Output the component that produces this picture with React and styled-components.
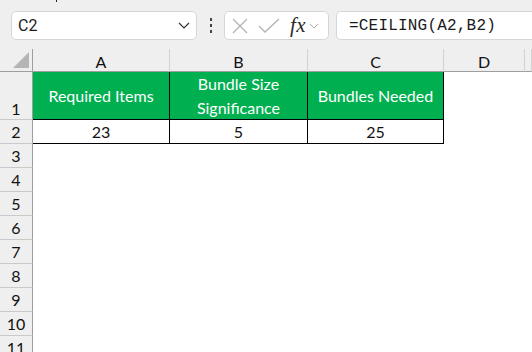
import React from "react";
import styled, { createGlobalStyle } from "styled-components";

const Global = createGlobalStyle`
  html, body { margin: 0; padding: 0; }
  body {
    background: #efefef;
    width: 532px;
    height: 352px;
    overflow: hidden;
    font-family: "Lato", "Noto Sans", sans-serif;
  }
`;

const Page = styled.div`
  width: 532px;
  height: 352px;
  overflow: hidden;
  display: flex;
  flex-direction: column;
`;

const Ribbon = styled.div`
  margin-left: 11px;
  height: 6px;
  background: #fff;
  border-radius: 0 0 0 8px;
  box-shadow: 0 1px 3px rgba(0, 0, 0, 0.18);
  position: relative;
`;

const Caret = styled.span`
  position: absolute;
  left: 45px;
  top: 0;
  width: 1px;
  height: 2px;
  background: #222;
`;

const Toolbar = styled.div`
  display: flex;
  align-items: center;
  height: 29px;
  margin-top: 11px;
  padding-left: 11px;
`;

const Box = styled.div`
  box-sizing: border-box;
  height: 29px;
  background: #fff;
  border: 1px solid #d6d6d6;
  border-radius: 5px;
  display: flex;
  align-items: center;
  flex-shrink: 0;
`;

const NameBox = styled(Box)`
  width: 186px;
  padding: 0 6px 0 6px;
  justify-content: space-between;
  font-family: "Roboto", "Noto Sans", sans-serif;
  font-size: 16px;
  color: #1a1a1a;
`;

const Dots = styled.div`
  width: 27px;
  display: flex;
  flex-direction: column;
  align-items: center;
  gap: 3px;
  flex-shrink: 0;
`;

const Dot = styled.span`
  width: 2px;
  height: 3px;
  background: #444;
`;

const FxBox = styled(Box)`
  width: 105px;
  padding-left: 7px;
`;

const Fx = styled.span`
  font-family: "Liberation Serif", serif;
  font-style: italic;
  font-size: 21px;
  line-height: 1;
  color: #2a2a2a;
  margin-left: 10px;
  letter-spacing: 0.5px;
`;

const ChevWrap = styled.span`
  display: flex;
  margin-left: ${(p) => p.$gap || 0}px;
`;

const FormulaBox = styled(Box)`
  margin-left: 7px;
  width: 260px;
  padding-left: 12px;
  border-radius: 5px 0 0 5px;
  border-right: none;
  font-family: "Liberation Mono", monospace;
  font-size: 16px;
  letter-spacing: 0.2px;
  color: #1a1a1a;
`;

const Sheet = styled.div`
  margin-top: 9px;
  display: grid;
  grid-template-columns: 33px 137px 138px 136px 81px 1fr;
  grid-template-rows: 23px 48px repeat(10, 24px);
  background: #fff;
  flex: 1;
`;

const ColHead = styled.div`
  box-sizing: border-box;
  background: #efefef;
  border-bottom: 1px solid #9e9e9e;
  border-right: 1px solid #d2d2d2;
  display: flex;
  align-items: center;
  justify-content: center;
  font-size: 16px;
  color: #111;
  padding-top: 2px;
`;

const Corner = styled(ColHead)`
  border-right: 1px solid #9e9e9e;
  position: relative;
`;

const Tri = styled.span`
  position: absolute;
  right: 3px;
  bottom: 3px;
  width: 0;
  height: 0;
  border-left: 16px solid transparent;
  border-bottom: 16px solid #b5b5b5;
`;

const RowHead = styled.div`
  box-sizing: border-box;
  background: #efefef;
  border-right: 1px solid #9e9e9e;
  border-bottom: 1px solid #c9c9c9;
  display: flex;
  align-items: ${(p) => (p.$tall ? "flex-end" : "center")};
  justify-content: center;
  font-size: 16px;
  color: #111;
  padding-bottom: ${(p) => (p.$tall ? "1px" : "0")};
`;

const Cell = styled.div`
  box-sizing: border-box;
  background: ${(p) => (p.$head ? "#00b050" : "#fff")};
  color: ${(p) => (p.$head ? "#fff" : "#111")};
  border-right: ${(p) => (p.$table ? "1px solid #000" : "none")};
  border-bottom: ${(p) => (p.$table ? "1px solid #000" : "none")};
  display: flex;
  align-items: center;
  justify-content: center;
  text-align: center;
  font-size: 16px;
  line-height: 24px;
`;

const Chevron = ({ size = 12, color = "#333" }) => (
  <svg width={size} height={size / 2 + 1} viewBox="0 0 12 7">
    <path d="M1 1 L6 6 L11 1" fill="none" stroke={color} strokeWidth="1.2" />
  </svg>
);

const cols = ["A", "B", "C", "D", ""];

export default function App() {
  const rows = [3, 4, 5, 6, 7, 8, 9, 10, 11];
  return (
    <Page>
      <Global />
      <Ribbon>
        <Caret />
      </Ribbon>
      <Toolbar>
        <NameBox>
          <span>C2</span>
          <Chevron size={12} color="#333" />
        </NameBox>
        <Dots>
          <Dot />
          <Dot />
          <Dot />
        </Dots>
        <FxBox>
          <svg width="16" height="16" viewBox="0 0 16 16">
            <path d="M1 1 L15 15 M15 1 L1 15" stroke="#b3b3b3" strokeWidth="1.3" fill="none" />
          </svg>
          <ChevWrap $gap={10}>
            <svg width="22" height="16" viewBox="0 0 22 16">
              <path d="M1 8 L7 14 L21 1" stroke="#b3b3b3" strokeWidth="1.3" fill="none" />
            </svg>
          </ChevWrap>
          <Fx>fx</Fx>
          <ChevWrap $gap={3}>
            <Chevron size={10} color="#aaa" />
          </ChevWrap>
        </FxBox>
        <FormulaBox>=CEILING(A2,B2)</FormulaBox>
      </Toolbar>
      <Sheet>
        <Corner>
          <Tri />
        </Corner>
        {cols.map((c, i) => (
          <ColHead key={i}>{c}</ColHead>
        ))}

        <RowHead $tall>1</RowHead>
        <Cell $head $table>Required Items</Cell>
        <Cell $head $table>
          Bundle Size
          <br />
          Significance
        </Cell>
        <Cell $head $table>Bundles Needed</Cell>
        <Cell />
        <Cell />

        <RowHead>2</RowHead>
        <Cell $table>23</Cell>
        <Cell $table>5</Cell>
        <Cell $table>25</Cell>
        <Cell />
        <Cell />

        {rows.map((r) => (
          <React.Fragment key={r}>
            <RowHead>{r}</RowHead>
            <Cell />
            <Cell />
            <Cell />
            <Cell />
            <Cell />
          </React.Fragment>
        ))}
      </Sheet>
    </Page>
  );
}
